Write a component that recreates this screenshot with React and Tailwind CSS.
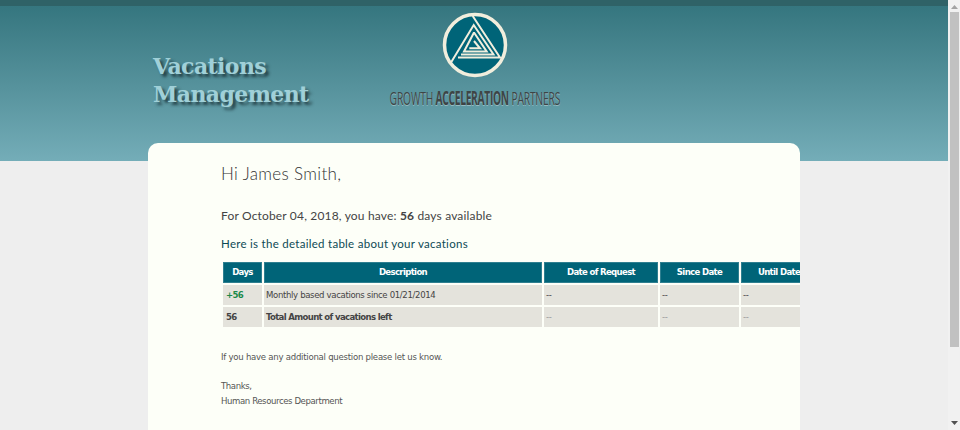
export default function App() {
  const font = "font-['DejaVu_Sans_Condensed','DejaVu_Sans',sans-serif] text-[9.5px]";
  const body = `${font} tracking-[-0.35px]`;
  const bold = "font-bold tracking-[-0.65px]";
  const th = `bg-[#006478] border border-[#2e7f90] text-white text-center h-[21px] p-0 whitespace-nowrap ${bold}`;
  const td = "bg-[#e4e3dc] h-[20px] p-0 pl-[2px] text-left whitespace-nowrap";
  return (
    <div className="flex w-[960px] h-[430px] overflow-hidden bg-[#eeeeee]">
      <main className="flex-1 min-w-0 overflow-hidden">
        <header className="h-[161px] border-t-[6px] border-[#2f6267] bg-gradient-to-b from-[#35767f] to-[#74adb8] flex items-start pl-[153px]">
          <h1 className="w-[236px] mt-[46px] font-['DejaVu_Serif',serif] font-bold text-[22px] leading-[28px] tracking-[-0.6px] text-[#a0d0d8] [text-shadow:3px_3px_3px_rgba(20,40,45,0.75)]">
            Vacations<br />Management
          </h1>
          <div className="w-[171px] flex flex-col items-center">
            <svg width="68" height="68" viewBox="0 0 68 68" className="mt-[5px] block">
              <circle cx="34" cy="34" r="30.5" fill="#006478" stroke="#f1eedd" strokeWidth="3.5" />
              <g fill="none" stroke="#f1eedd" strokeWidth="2" strokeLinejoin="miter">
                <path d="M31.7 5 L59 46.5 H17" />
                <path d="M9.7 52 L32.7 14 L52.5 43.5 H20" />
                <path d="M33 21.5 L45.7 40.5 H23 L33 21.5" />
                <path d="M33 30 L39 37.3 H28.3" />
              </g>
            </svg>
            <div className="mt-[9px] whitespace-nowrap font-['Open_Sans',sans-serif] text-[19px] leading-[20px] text-[#3d4445] tracking-[-0.3px] scale-x-[0.54] [text-shadow:0_1px_0_rgba(255,255,255,0.35)]">
              GROWTH <span className="font-bold tracking-[-0.6px]">ACCELERATION</span> PARTNERS
            </div>
          </div>
        </header>
        <section className="relative -mt-[18px] ml-[148px] w-[652px] h-[300px] bg-[#fdfff8] rounded-t-[10px] overflow-hidden pl-[73px] pt-[21px]">
          <h2 className="font-['Lato',sans-serif] font-light text-[17px] leading-[20px] tracking-[0.35px] text-[#333]">Hi James Smith,</h2>
          <p className="mt-[24px] font-['Lato',sans-serif] text-[12px] leading-[16px] tracking-[0.17px] text-[#444]">
            For October 04, 2018, you have: <b className="font-bold">56</b> days available
          </p>
          <p className="mt-[12px] font-['Lato',sans-serif] text-[11.5px] leading-[15px] tracking-[0.28px] text-[#0d4a55]">Here is the detailed table about your vacations</p>
          <table className={`mt-[9px] table-fixed border-separate border-spacing-[2px] w-[598px] ${body} text-[#444]`}>
            <colgroup>
              <col className="w-[39px]" />
              <col className="w-[278px]" />
              <col className="w-[114px]" />
              <col className="w-[79px]" />
              <col className="w-[76px]" />
            </colgroup>
            <thead>
              <tr>
                <th className={th}>Days</th>
                <th className={th}>Description</th>
                <th className={th}>Date of Request</th>
                <th className={th}>Since Date</th>
                <th className={th}>Until Date</th>
              </tr>
            </thead>
            <tbody>
              <tr>
                <td className={`${td} pl-[3px] ${bold} text-[#1c8a4a]`}>+56</td>
                <td className={td}>Monthly based vacations since 01/21/2014</td>
                <td className={td}>--</td>
                <td className={td}>--</td>
                <td className={td}>--</td>
              </tr>
              <tr>
                <td className={`${td} pl-[3px] ${bold}`}>56</td>
                <td className={`${td} ${bold}`}>Total Amount of vacations left</td>
                <td className={`${td} text-[#999]`}>--</td>
                <td className={`${td} text-[#999]`}>--</td>
                <td className={`${td} text-[#999]`}>--</td>
              </tr>
            </tbody>
          </table>
          <p className={`mt-[20px] leading-[15px] text-[#555] ${font} tracking-[-0.25px]`}>If you have any additional question please let us know.</p>
          <p className={`mt-[14px] leading-[15px] text-[#555] ${font} tracking-[-0.4px]`}>Thanks,<br />Human Resources Department</p>
        </section>
      </main>
      <aside className="w-[12px] shrink-0 bg-[#f1f1f1] flex flex-col items-center">
        <svg width="7" height="4" viewBox="0 0 7 4" className="mt-[5px] mb-[3px]"><path d="M3.5 0 L7 4 H0 Z" fill="#a3a3a3" /></svg>
        <div className="w-[9px] h-[335px] bg-[#c1c1c1]" />
        <div className="flex-1" />
        <svg width="7" height="4" viewBox="0 0 7 4" className="mb-[5px]"><path d="M0 0 H7 L3.5 4 Z" fill="#505050" /></svg>
      </aside>
    </div>
  );
}
